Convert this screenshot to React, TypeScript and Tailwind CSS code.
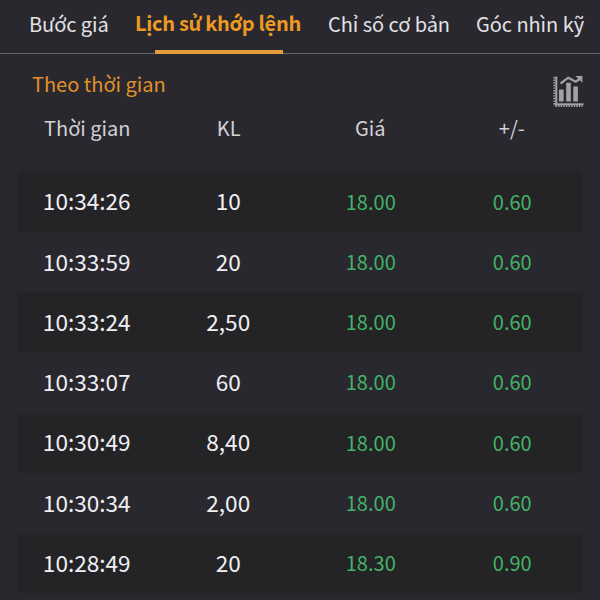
import clsx from 'clsx'

interface Trade {
  time: string
  volume: string
  price: string
  change: string
}

const TABS = [
  { label: 'Bước giá', width: 'w-[106px]' },
  { label: 'Lịch sử khớp lệnh', width: 'w-[193px]' },
  { label: 'Chỉ số cơ bản', width: 'w-[148px]' },
  { label: 'Góc nhìn kỹ', width: 'w-[120px]' },
]

const ACTIVE_TAB = 1

const COLUMNS = ['Thời gian', 'KL', 'Giá', '+/-']

const TRADES: Trade[] = [
  { time: '10:34:26', volume: '10', price: '18.00', change: '0.60' },
  { time: '10:33:59', volume: '20', price: '18.00', change: '0.60' },
  { time: '10:33:24', volume: '2,50', price: '18.00', change: '0.60' },
  { time: '10:33:07', volume: '60', price: '18.00', change: '0.60' },
  { time: '10:30:49', volume: '8,40', price: '18.00', change: '0.60' },
  { time: '10:30:34', volume: '2,00', price: '18.00', change: '0.60' },
  { time: '10:28:49', volume: '20', price: '18.30', change: '0.90' },
]

function ChartIcon() {
  return (
    <svg className="mt-px" width="32" height="32" viewBox="0 0 32 32" fill="none" stroke="#a3a2a8">
      <path d="M4.3 1.5v29" strokeWidth="2" />
      <path d="M2.4 2v28.5" strokeWidth="2" strokeDasharray="1.4 1.2" />
      <path d="M2.5 29.3h29" strokeWidth="2" />
      <path d="M3.5 31h27" strokeWidth="1.8" strokeDasharray="1.4 1.2" />
      <path d="M9.3 14.5v12M16.5 7.8v18.7M23.6 11.5v15" strokeWidth="4.6" />
      <path d="M8.5 8.5l7.8-5.8 7.5 4L27.5 4" strokeWidth="2.2" />
      <path d="M24.8 1.5h5v4.8z" fill="#a3a2a8" strokeWidth="1.2" />
    </svg>
  )
}

function Tabs() {
  return (
    <nav className="flex h-[54px] shrink-0 border-b border-[#67666c] pl-[29px]">
      {TABS.map((tab, i) => (
        <div
          key={tab.label}
          className={clsx(
            'relative shrink-0 whitespace-nowrap text-[20px]',
            tab.width,
            i === ACTIVE_TAB
              ? 'font-bold leading-[45px] tracking-[-0.3px] text-[#ee9a22]'
              : 'leading-[48px] tracking-[-0.05px] text-[#e2e1e6]',
          )}
        >
          {tab.label}
          {i === ACTIVE_TAB && (
            <span className="absolute -bottom-px left-5 h-1 w-32 bg-[#e29d3a]" />
          )}
        </div>
      ))}
    </nav>
  )
}

function TradeRow({ trade, shaded }: { trade: Trade; shaded: boolean }) {
  return (
    <div
      className={clsx(
        'grid h-[60.3px] shrink-0 grid-cols-4 items-center rounded text-center',
        shaded && 'bg-[#242427]',
      )}
    >
      <span className="pr-0.5 text-[22.6px] text-[#f0eff3]">{trade.time}</span>
      <span className="pr-0.5 text-[22.6px] text-[#f0eff3]">{trade.volume}</span>
      <span className="text-[20px] text-[#42b366]">{trade.price}</span>
      <span className="text-[20px] text-[#42b366]">{trade.change}</span>
    </div>
  )
}

export default function App() {
  return (
    <div className="flex h-[600px] w-[600px] flex-col overflow-hidden bg-[#29282e] font-['Noto_Sans_CJK_SC',sans-serif] leading-none">
      <Tabs />
      <div className="flex h-[54px] shrink-0 items-start justify-between pt-5 pr-4 pl-8">
        <h2 className="text-[20px] leading-5 text-[#e2902a]">Theo thời gian</h2>
        <ChartIcon />
      </div>
      <div className="mx-[17px] grid h-[63.4px] shrink-0 grid-cols-4 pt-2.5 text-center text-[20px] leading-5 text-[#d2d1d7]">
        {COLUMNS.map(column => (
          <span key={column} className="pr-px">{column}</span>
        ))}
      </div>
      <div className="mx-[17px] flex flex-col">
        {TRADES.map((trade, i) => (
          <TradeRow key={trade.time} trade={trade} shaded={i % 2 === 0} />
        ))}
      </div>
    </div>
  )
}
